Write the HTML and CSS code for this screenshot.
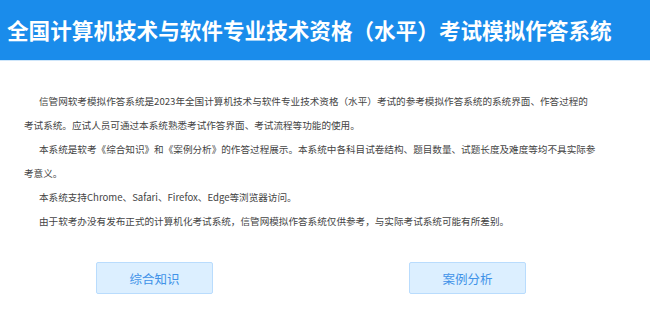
FILE: index.html
```html
<!DOCTYPE html>
<html lang="zh-CN">
<head>
    <meta charset="UTF-8">
    <meta name="viewport" content="width=device-width, initial-scale=1.0">
    <title>全国计算机技术与软件专业技术资格（水平）考试模拟作答系统</title>
    <link rel="stylesheet" href="styles.css">
</head>
<body>

<div class="header">
    <h1 class="title">全国计算机技术与软件专业技术资格（水平）考试模拟作答系统</h1>
</div>

<div class="intro">
    <p>信管网软考模拟作答系统是2023年全国计算机技术与软件专业技术资格（水平）考试的参考模拟作答系统的系统界面、作答过程的考试系统。应试人员可通过本系统熟悉考试作答界面、考试流程等功能的使用。</p>
    <p>本系统是软考《综合知识》和《案例分析》的作答过程展示。本系统中各科目试卷结构、题目数量、试题长度及难度等均不具实际参考意义。</p>
    <p>本系统支持Chrome、Safari、Firefox、Edge等浏览器访问。</p>
    <p>由于软考办没有发布正式的计算机化考试系统，信管网模拟作答系统仅供参考，与实际考试系统可能有所差别。</p>
</div>

<div class="actions">
    <a class="btn" href="#">综合知识</a>
    <a class="btn" href="#">案例分析</a>
</div>

</body>
</html>
```

FILE: styles.css
```css
body {
    margin: 0;
    font-family: "Noto Sans CJK SC", "Noto Sans", sans-serif;
    background-color: #fff;
}
.header {
    height: 60px;
    background-color: #1a8ceb;
    border-bottom: 1px solid #cfe6fa;
    display: flex;
    align-items: center;
    padding-left: 7px;
}
.title {
    margin: 0;
    color: #fff;
    font-size: 21.6px;
    font-weight: bold;
    line-height: 1;
}
.intro {
    width: 572.5px;
    padding: 28px 0 0 24px;
    font-size: 9.6px;
    line-height: 24px;
    color: #444;
}
.intro p {
    margin: 0;
    text-indent: 15px;
}
.actions {
    display: flex;
    gap: 196px;
    padding: 29px 0 0 96px;
}
.btn {
    width: 115px;
    height: 30px;
    display: flex;
    align-items: center;
    justify-content: center;
    background-color: #dcefff;
    border: 1px solid #b9dcfd;
    border-radius: 2px;
    color: #4092e8;
    font-size: 12.5px;
    text-decoration: none;
}
```
